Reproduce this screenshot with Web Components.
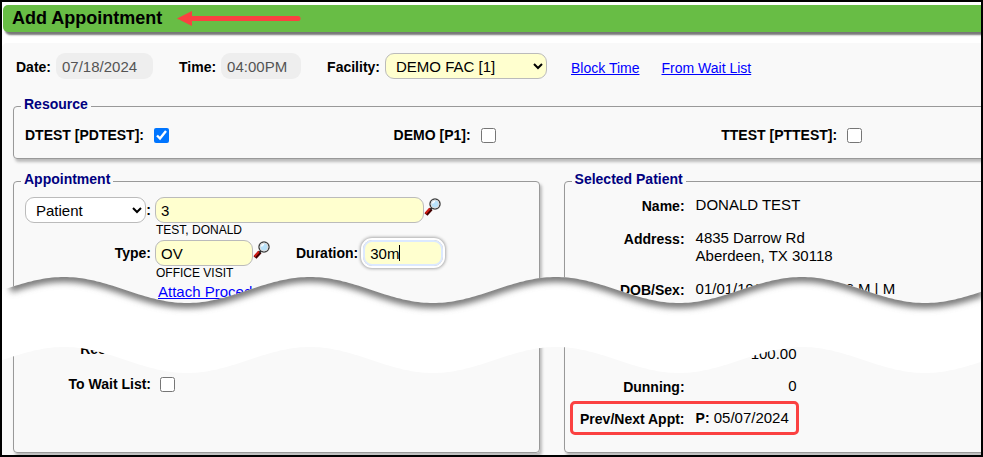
<!DOCTYPE html>
<html lang="en">
  <head>
    <meta charset="utf-8">
    <title>Add Appointment</title>
    <style>
      html, body {
        margin: 0;
        height: 100%;
      }
      body {
        font-family: "Liberation Sans", Arial, sans-serif;
        font-size: 15px;
        line-height: 18px;
        color: #000;
        --line: #999;
        --mark: #fb4141;
        --field: #ffffcf;
      }
    </style>
  </head>
  <body>
    <appointment-page></appointment-page>

    <template id="appointment-page">
      <style>
        :host {
          box-sizing: border-box;
          display: flex;
          flex-direction: column;
          position: relative;
          min-height: 100%;
          border: 2px solid #000;
          background: #fff;
          overflow: hidden;
        }
        main {
          flex: 1;
          display: flex;
          flex-direction: column;
          margin-top: 11px;
          padding: 10px 0 2px 11px;
          background: #f9f9f9;
          border-top-left-radius: 5px;
        }
        /* the panels run on past the right side of the frame */
        .wide {
          margin-right: -10px;
        }
        .panels {
          flex: 1;
          display: grid;
          grid-template-columns: 526fr 427fr;
          gap: 24px;
          margin-top: 12px;
        }
      </style>
      <title-bar>Add Appointment</title-bar>
      <main>
        <schedule-bar></schedule-bar>
        <field-group class="wide" heading="Resource">
          <resource-list></resource-list>
        </field-group>
        <div class="panels wide">
          <field-group heading="Appointment">
            <appointment-form></appointment-form>
          </field-group>
          <field-group heading="Selected Patient">
            <patient-details></patient-details>
          </field-group>
        </div>
      </main>
      <torn-strip></torn-strip>
    </template>

    <template id="title-bar">
      <style>
        :host {
          display: flex;
          align-items: center;
          gap: 15px;
          height: 27px;
          margin: 3px 0 0 1px;
          padding-left: 9px;
          background: #68bd45;
          border-radius: 5px 0 0 5px;
          box-shadow: 2px 3px 2px #777;
        }
        h1 {
          margin: 0;
          font-size: 18px;
          line-height: 27px;
        }
        svg {
          fill: var(--mark);
          stroke: var(--mark);
        }
      </style>
      <h1><slot></slot></h1>
      <svg width="124" height="16" viewBox="0 0 124 16">
        <path d="M0 7.500L15 0v15z" stroke="none"/>
        <path d="M13 7.500H121" stroke-width="5" stroke-linecap="round"/>
      </svg>
    </template>

    <template id="schedule-bar">
      <style>
        :host {
          display: flex;
          align-items: center;
          gap: 26px;
          height: 26px;
          margin: 0 0 17px 3px;
        }
        div {
          display: flex;
          align-items: center;
          gap: 5px;
        }
        label {
          font-size: 14px;
          font-weight: bold;
          padding-top: 2px;
        }
        input, select {
          box-sizing: border-box;
          height: 26px;
          font: inherit;
          border-radius: 9px;
        }
        input {
          border: 0;
          padding: 0 6px;
          background: #eee;
          color: #545454;
        }
        #date {
          width: 97px;
        }
        #time {
          width: 80px;
        }
        select {
          width: 162px;
          padding: 0 0 0 6px;
          border: 1px solid #bbb;
          background: var(--field);
          color: #000;
        }
        a {
          font-size: 14px;
          padding-top: 4px;
          color: #00f;
        }
        nav {
          display: flex;
          gap: 22px;
          margin-left: -2px;
        }
      </style>
      <div>
        <label for="date">Date:</label>
        <input id="date" value="07/18/2024" disabled>
      </div>
      <div>
        <label for="time">Time:</label>
        <input id="time" value="04:00PM" disabled>
      </div>
      <div>
        <label for="facility">Facility:</label>
        <select id="facility"><option>DEMO FAC [1]</option></select>
      </div>
      <nav>
        <a href="#block">Block Time</a>
        <a href="#wait">From Wait List</a>
      </nav>
    </template>

    <template id="field-group">
      <style>
        :host {
          display: flex;
        }
        fieldset {
          flex: 1;
          min-width: 0;
          margin: 0;
          padding: 0 11px 0 7px;
          border: 1px solid var(--line);
          border-radius: 4px;
          box-shadow: 2px 3px 3px #bbb;
        }
        legend {
          padding: 0 3px 4px;
          font-size: 14px;
          font-weight: bold;
          line-height: 16px;
          color: #000080;
        }
        div {
          padding-left: 4px;
        }
      </style>
      <fieldset>
        <legend></legend>
        <div><slot></slot></div>
      </fieldset>
    </template>

    <template id="resource-list">
      <style>
        :host {
          display: grid;
          grid-template-columns: 9fr 8fr 6fr;
          padding: 10px 12px 14px 0;
        }
        div {
          display: flex;
          align-items: center;
          gap: 10px;
        }
        label {
          font-size: 14px;
          font-weight: bold;
        }
        input {
          width: 15px;
          height: 15px;
          margin: 0;
        }
      </style>
      <div>
        <label for="dtest">DTEST [PDTEST]:</label>
        <input id="dtest" type="checkbox" checked>
      </div>
      <div>
        <label for="demo">DEMO [P1]:</label>
        <input id="demo" type="checkbox">
      </div>
      <div>
        <label for="ttest">TTEST [PTTEST]:</label>
        <input id="ttest" type="checkbox">
      </div>
    </template>

    <template id="appointment-form">
      <style>
        :host {
          display: grid;
          grid-template-columns: 126px 1fr;
          column-gap: 4px;
          padding-top: 6px;
        }
        label, .colon {
          font-size: 14px;
          font-weight: bold;
        }
        .name {
          display: flex;
          align-items: center;
          justify-content: flex-end;
        }
        .controls {
          display: flex;
          align-items: center;
        }
        .note {
          grid-column: 2;
          height: 17px;
          font-size: 12px;
          line-height: 14px;
          padding-left: 1px;
        }
        .text, select {
          box-sizing: border-box;
          height: 26px;
          font: inherit;
          color: #000;
          border: 1px solid #bbb;
          border-radius: 9px;
        }
        .text {
          padding: 0 5px;
          background: var(--field);
        }
        select {
          width: 122px;
          padding: 0 0 0 6px;
          background: #fff;
        }
        #who {
          width: 269px;
        }
        #type {
          width: 98px;
        }
        #duration {
          width: 80px;
          border: 2px solid #dce9ff;
          outline: 2px solid #fff;
          box-shadow: 0 0 3px 3px #aaa;
          caret-color: transparent;
        }
        .duration {
          display: flex;
          align-items: center;
          gap: 5px;
          margin-left: 26px;
          position: relative;
        }
        /* text cursor after the typed value */
        .duration::after {
          content: "";
          position: absolute;
          right: 43px;
          width: 1px;
          height: 16px;
          background: #000;
        }
        a {
          grid-column: 2;
          padding-left: 3px;
          color: #00f;
        }
        .repeat {
          grid-column: 1;
          justify-self: end;
          margin: 39px 0 17px;
        }
        .wait {
          grid-column: 1;
        }
        .check {
          width: 15px;
          height: 15px;
          margin: 0 0 0 5px;
        }
      </style>
      <div class="name">
        <select id="by" aria-label="Search by"><option>Patient</option></select>
        <span class="colon">:</span>
      </div>
      <div class="controls">
        <input class="text" id="who" value="3" aria-label="Patient">
        <search-icon></search-icon>
      </div>
      <div class="note">TEST, DONALD</div>
      <div class="name"><label for="type">Type:</label></div>
      <div class="controls">
        <input class="text" id="type" value="OV">
        <search-icon></search-icon>
        <div class="duration">
          <label for="duration">Duration:</label>
          <input class="text" id="duration" value="30m">
        </div>
      </div>
      <div class="note">OFFICE VISIT</div>
      <a href="#attach">Attach Procedure</a>
      <label class="repeat">Recurring:</label>
      <div class="name wait"><label for="wait">To Wait List:</label></div>
      <div class="controls"><input class="check" id="wait" type="checkbox"></div>
    </template>

    <template id="search-icon">
      <style>
        :host {
          display: block;
          align-self: flex-start;
          width: 17px;
          height: 19px;
        }
      </style>
      <svg width="17" height="19" viewBox="0 0 17 19">
        <path d="M2 17.500L7 12" stroke="#400" stroke-width="4"/>
        <path d="M1.500 16.500L6 11.500" stroke="#d01c14" stroke-width="2"/>
        <path d="M6.500 12.500L8.500 10.500" stroke="#222" stroke-width="2"/>
        <circle cx="11" cy="7" r="5" fill="#b9e2fa" stroke="#444" stroke-width="1.500"/>
        <circle cx="11" cy="7" r="4" fill="none" stroke="#ddd" stroke-width="1"/>
        <path d="M8.500 6.500Q9 4.500 11 4.500" fill="none" stroke="#fff" stroke-width="1.500"/>
      </svg>
    </template>

    <template id="patient-details">
      <style>
        :host {
          display: block;
          padding-top: 5px;
        }
        dl {
          display: flex;
          flex-direction: column;
          align-items: flex-start;
          gap: 15px;
          margin: 0;
        }
        dl + dl {
          margin-top: 47px;
          gap: 14px;
        }
        dl div {
          display: flex;
          gap: 11px;
          position: relative;
        }
        dt {
          width: 109px;
          font-size: 14px;
          font-weight: bold;
          line-height: 20px;
          height: 18px;
          text-align: right;
          white-space: nowrap;
        }
        dd {
          margin: 0;
          min-width: 101px;
          white-space: pre;
        }
        .num {
          text-align: right;
        }
        b {
          font-size: 14px;
        }
        .marked::after {
          content: "";
          position: absolute;
          inset: -8px -2px -8px -6px;
          border: 3px solid var(--mark);
          border-radius: 5px;
        }
      </style>
      <dl>
        <div><dt>Name:</dt><dd>DONALD TEST</dd></div>
        <div><dt>Address:</dt><dd>4835 Darrow Rd<br>Aberdeen, TX 30118</dd></div>
        <div><dt>DOB/Sex:</dt><dd>01/01/1968 | 56 Years 6 M | M</dd></div>
      </dl>
      <dl>
        <div><dt></dt><dd class="num">100.00</dd></div>
        <div><dt>Dunning:</dt><dd class="num">0</dd></div>
        <div class="marked"><dt>Prev/Next Appt:</dt><dd><b>P:</b> 05/07/2024</dd></div>
      </dl>
    </template>

    <template id="torn-strip">
      <style>
        :host {
          position: absolute;
          top: 274px;
          left: 0;
          right: 0;
        }
        svg {
          display: block;
          width: 100%;
          height: 100px;
        }
      </style>
      <svg viewBox="0 0 979 100" preserveAspectRatio="none">
        <defs>
          <clipPath id="gap"><path id="shape"/></clipPath>
          <filter id="soft" x="-5%" y="-50%" width="110%" height="200%">
            <feGaussianBlur stdDeviation="3"/>
          </filter>
        </defs>
        <path id="paper" fill="#fff"/>
        <g clip-path="url(#gap)">
          <path id="shade" fill="none" stroke="#777" stroke-width="10" filter="url(#soft)"/>
        </g>
      </svg>
    </template>

    <script>
      function stamp(host) {
        const template = document.getElementById(host.localName);
        const root = host.attachShadow({mode: 'open'});
        root.appendChild(template.content.cloneNode(true));
        return root;
      }

      // elements that only need their template
      ['title-bar', 'schedule-bar', 'resource-list', 'search-icon',
        'appointment-form', 'patient-details'].forEach(name => {
        customElements.define(name, class extends HTMLElement {
          constructor() {
            super();
            stamp(this);
          }
        });
      });

      customElements.define('field-group',
        class extends HTMLElement {
          constructor() {
            super();
            this.root = stamp(this);
          }
          connectedCallback() {
            this.root.querySelector('legend').textContent = this.getAttribute('heading');
          }
      });

      // wavy white strip, the page above it drops a shadow on it
      customElements.define('torn-strip',
        class extends HTMLElement {
          constructor() {
            super();
            const root = stamp(this);
            const wave = (from, to, mid) => {
              const points = [];
              const step = from < to ? 3 : -3;
              for (let x = from; step > 0 ? x <= to : x >= to; x += step) {
                const y = mid - 13 * Math.cos((x - 62) * 2 * Math.PI / 246);
                points.push(x + ' ' + y.toFixed(1));
              }
              return points.join('L');
            };
            const top = wave(8, 980, 14);
            const shape = 'M' + top + 'L' + wave(980, -1, 84) + 'L-1 14z';
            root.getElementById('shape').setAttribute('d', shape);
            root.getElementById('paper').setAttribute('d', shape);
            root.getElementById('shade').setAttribute('d', 'M' + top);
          }
      });

      customElements.define('appointment-page',
        class extends HTMLElement {
          constructor() {
            super();
            stamp(this);
          }
      });
    </script>
  </body>
</html>
